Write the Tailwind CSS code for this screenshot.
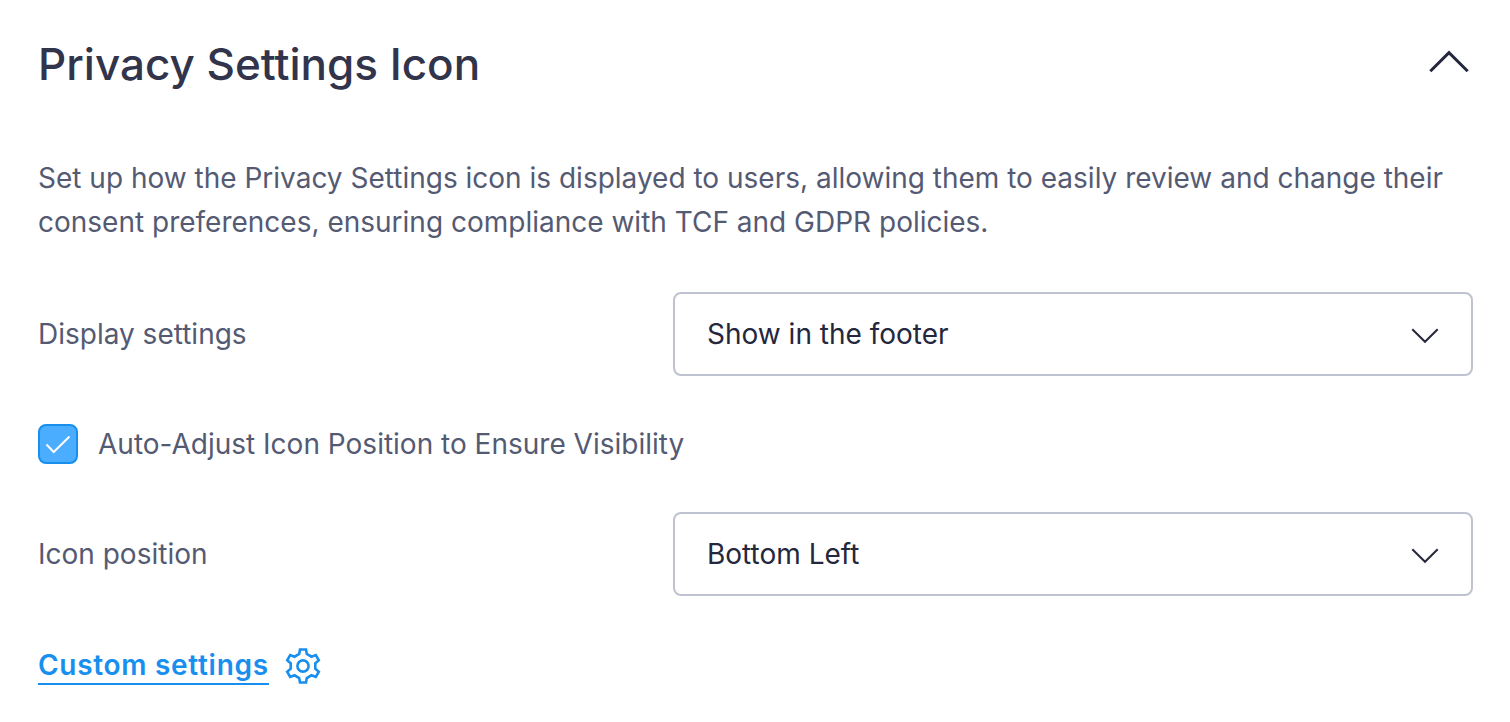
<!DOCTYPE html>
<html lang="en">
<head>
  <meta charset="UTF-8" />
  <meta name="viewport" content="width=device-width, initial-scale=1.0"/>
  <title>Privacy Settings Icon</title>
  <script src="https://cdn.jsdelivr.net/npm/@tailwindcss/browser@4"></script>
</head>
<body class="bg-white font-['Inter',sans-serif] text-[28px] leading-[44px] text-[#555a73]">

  <section class="pl-[38px] pr-[37px] pt-9">

    <!-- Header -->
    <div class="flex justify-between items-center h-14">
      <h2 class="text-[44px] font-medium text-[#31344b]">Privacy Settings Icon</h2>
      <button type="button" aria-label="Collapse section" aria-expanded="true">
        <svg class="w-12 h-12" viewBox="0 0 48 48" fill="none" stroke="#25273d" stroke-width="3">
          <path d="M5.3 31.2L24 12.7L42.7 31.2"/>
        </svg>
      </button>
    </div>

    <p class="mt-16">Set up how the Privacy Settings icon is displayed to users, allowing them to easily review and change their consent preferences, ensuring compliance with TCF and GDPR policies.</p>

    <!-- Display settings -->
    <div class="mt-12 grid grid-cols-[635fr_800fr] items-center">
      <label for="display">Display settings</label>
      <div class="relative">
        <select id="display" class="block w-full h-21 appearance-none rounded-lg border-2 border-[#bfc2d0] bg-white pl-8 pr-20 text-[#25273d]">
          <option>Show in the footer</option>
          <option>Show as an icon</option>
        </select>
        <svg class="absolute right-8 top-1/2 w-8 h-8 -translate-y-1/2 pointer-events-none" viewBox="0 0 32 32" fill="none" stroke="#25273d" stroke-width="2">
          <path d="M3.3 11.3L16 23.8L28.7 11.3"/>
        </svg>
      </div>
    </div>

    <!-- Auto adjust -->
    <label class="mt-12 flex items-center gap-5 h-10">
      <span class="relative w-10 h-10">
        <input type="checkbox" checked class="peer block w-10 h-10 appearance-none rounded-lg border-2 border-[#bfc2d0] bg-white checked:border-[#188fee] checked:bg-[#4aadff]" />
        <svg class="absolute inset-0 hidden w-10 h-10 pointer-events-none peer-checked:block" viewBox="0 0 40 40" fill="none" stroke="white" stroke-width="2">
          <path d="M8.5 20.5L15.7 28L31.5 12.5"/>
        </svg>
      </span>
      Auto-Adjust Icon Position to Ensure Visibility
    </label>

    <!-- Icon position -->
    <div class="mt-12 grid grid-cols-[635fr_800fr] items-center">
      <label for="position">Icon position</label>
      <div class="relative">
        <select id="position" class="block w-full h-21 appearance-none rounded-lg border-2 border-[#bfc2d0] bg-white pl-8 pr-20 text-[#25273d]">
          <option>Bottom Left</option>
          <option>Bottom Right</option>
        </select>
        <svg class="absolute right-8 top-1/2 w-8 h-8 -translate-y-1/2 pointer-events-none" viewBox="0 0 32 32" fill="none" stroke="#25273d" stroke-width="2">
          <path d="M3.3 11.3L16 23.8L28.7 11.3"/>
        </svg>
      </div>
    </div>

    <!-- Custom settings -->
    <a href="#" class="mt-12 flex w-fit h-11 items-center gap-4 font-semibold tracking-wide text-[#188fee]">
      <span class="border-b-2 border-[#188fee] leading-9">Custom settings</span>
      <svg class="w-9 h-9" viewBox="-18 -18 36 36" fill="none" stroke="#188fee" stroke-width="2.6">
        <path d="M-3 -16.5H3L3.8 -12L8.5 -9.3L12.8 -10.9L15.8 -5.7L12.3 -2.7V2.7L15.8 5.7L12.8 10.9L8.5 9.3L3.8 12L3 16.5H-3L-3.8 12L-8.5 9.3L-12.8 10.9L-15.8 5.7L-12.3 2.7V-2.7L-15.8 -5.7L-12.8 -10.9L-8.5 -9.3L-3.8 -12Z"/>
        <circle r="5.6"/>
      </svg>
    </a>

  </section>

</body>
</html>
